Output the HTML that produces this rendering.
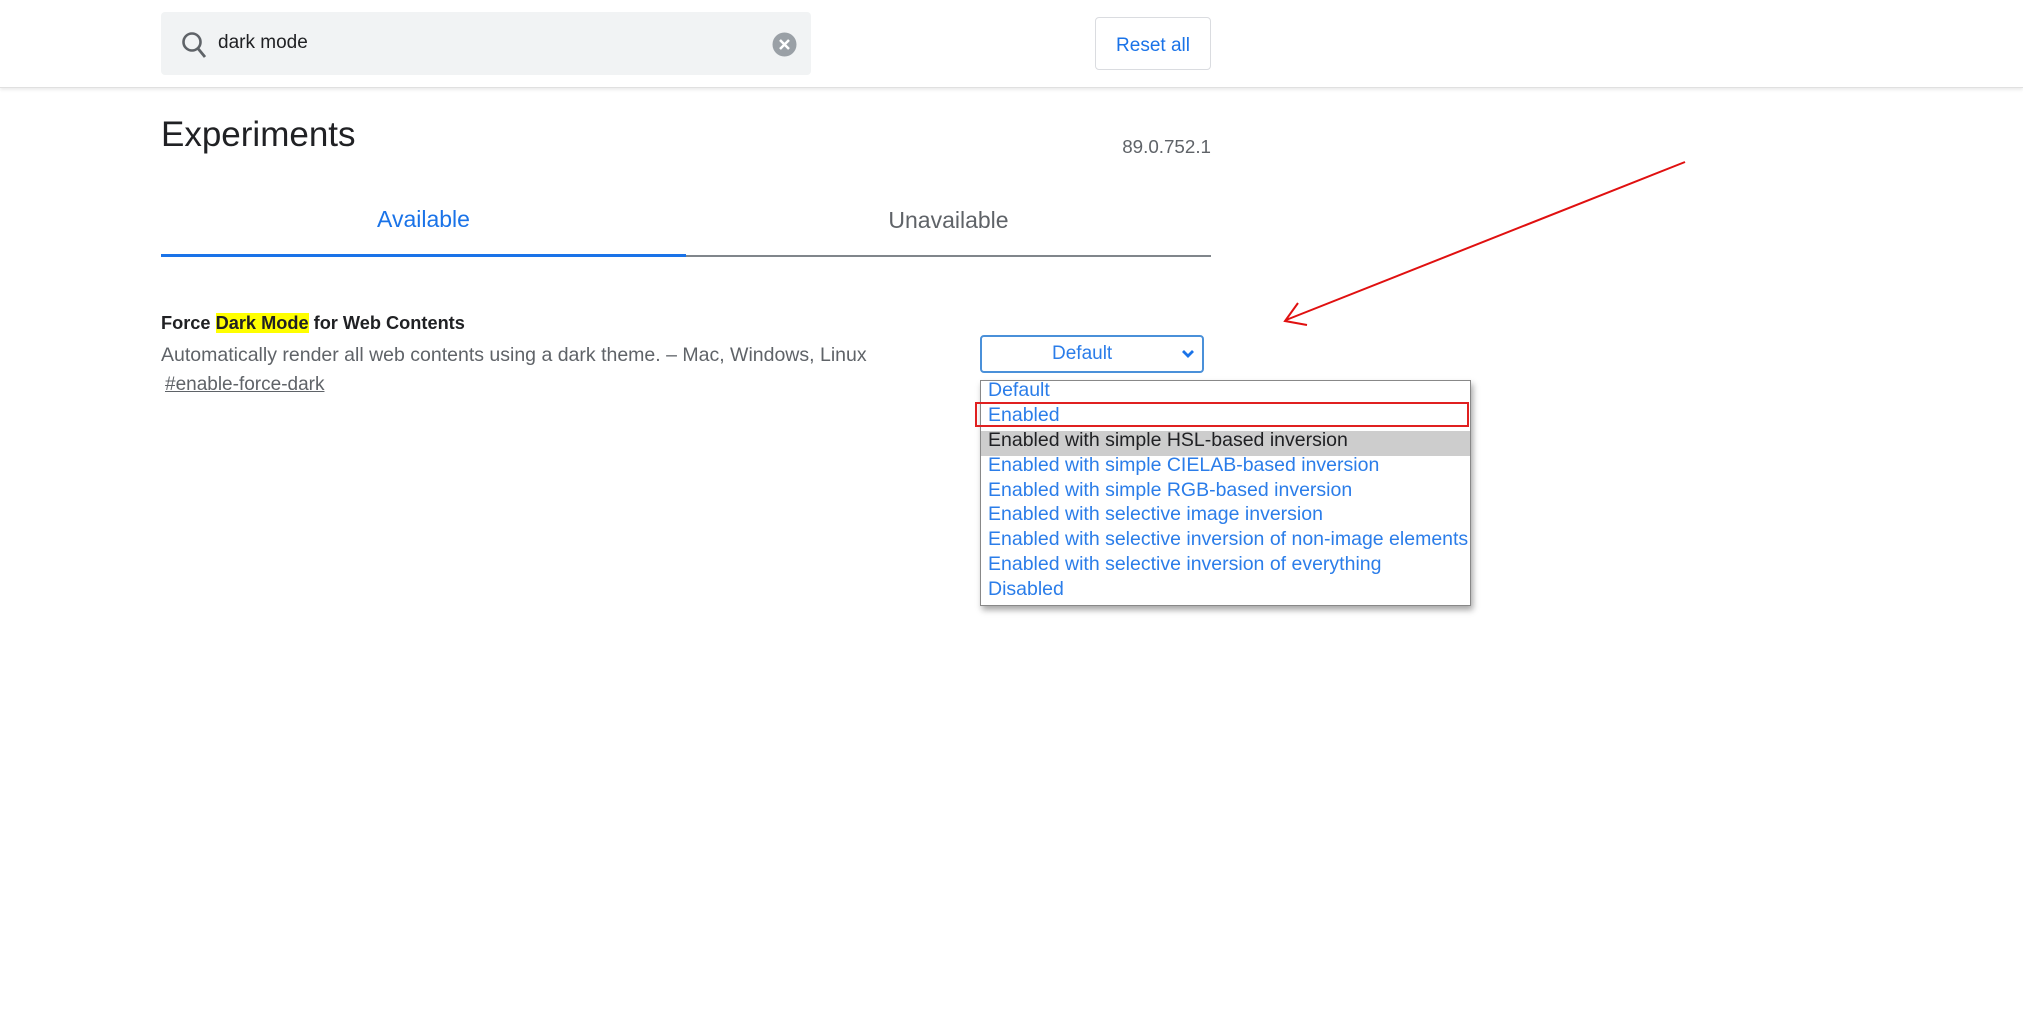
<!DOCTYPE html>
<html><head><meta charset="utf-8"><style>
*{margin:0;padding:0;box-sizing:border-box}
body{width:2023px;height:1018px;background:#fff;position:relative;overflow:hidden;font-family:"Liberation Sans",Arial,sans-serif}
.a{position:absolute;white-space:nowrap}
.hdr{position:absolute;left:0;top:0;width:2023px;height:88px;border-bottom:1px solid #e0e0e0;box-shadow:0 2px 3px rgba(0,0,0,.08)}
.search{left:161px;top:12px;width:650px;height:63px;background:#f1f3f4;border-radius:4px}
.btn{left:1095px;top:17px;width:116px;height:53px;border:1px solid #dadce0;border-radius:4px;color:#1a73e8;font-size:19px;text-align:center;line-height:55px}
.sel{left:980px;top:335px;width:224px;height:38px;border:2px solid #4a90d9;border-radius:4px;color:#2b7de9;font-size:19px;line-height:34px}
.dd{left:980px;top:380px;width:491px;height:226px;border:1px solid #888;background:#fff;box-shadow:2px 4px 6px rgba(0,0,0,.35)}
.dd div{height:24.9px;line-height:19px;padding-left:7px;font-size:19.5px;color:#2b7de9;white-space:nowrap}
.dd .h{background:#cdcdcd;color:#202124}
</style></head><body>
<div class="hdr"></div>
<div class="a search"></div>
<svg class="a" style="left:180px;top:30px" width="30" height="32" viewBox="0 0 30 32"><circle cx="12" cy="12" r="8.5" fill="none" stroke="#5f6368" stroke-width="2.6"/><line x1="18" y1="18.5" x2="25" y2="27" stroke="#5f6368" stroke-width="2.8"/></svg>
<div class="a" style="left:218px;top:32px;font-size:19px;color:#202124">dark mode</div>
<svg class="a" style="left:772px;top:32px" width="25" height="25" viewBox="0 0 25 25"><circle cx="12.5" cy="12.5" r="12" fill="#9aa0a6"/><path d="M8 8L17 17M17 8L8 17" stroke="#fff" stroke-width="2.5"/></svg>
<div class="a btn">Reset all</div>
<div class="a" style="left:161px;top:115px;font-size:35px;color:#202124">Experiments</div>
<div class="a" style="left:1100px;top:136px;width:111px;text-align:right;font-size:18.8px;color:#5f6368">89.0.752.1</div>
<div class="a" style="left:161px;top:206px;width:525px;text-align:center;font-size:23px;color:#1a73e8">Available</div>
<div class="a" style="left:686px;top:207px;width:525px;text-align:center;font-size:23px;color:#5f6368">Unavailable</div>
<div class="a" style="left:161px;top:254px;width:525px;height:3px;background:#1a73e8"></div>
<div class="a" style="left:686px;top:255px;width:525px;height:2px;background:#80868b"></div>
<div class="a" style="left:161px;top:313px;font-size:18.2px;font-weight:bold;color:#202124">Force <span style="background:#ffff00">Dark Mode</span> for Web Contents</div>
<div class="a" style="left:161px;top:344px;font-size:19.5px;color:#5f6368">Automatically render all web contents using a dark theme. – Mac, Windows, Linux</div>
<div class="a" style="left:165px;top:374px;font-size:19px;color:#5f6368;text-decoration:underline">#enable-force-dark</div>
<div class="a sel"><span style="position:absolute;left:70px">Default</span><svg style="position:absolute;left:199px;top:12px" width="14" height="10" viewBox="0 0 14 10"><path d="M2 2L7 7L12 2" fill="none" stroke="#1a73e8" stroke-width="2.8"/></svg></div>
<div class="a dd">
<div>Default</div><div>Enabled</div><div class="h">Enabled with simple HSL-based inversion</div><div>Enabled with simple CIELAB-based inversion</div><div>Enabled with simple RGB-based inversion</div><div>Enabled with selective image inversion</div><div>Enabled with selective inversion of non-image elements</div><div>Enabled with selective inversion of everything</div><div>Disabled</div>
</div>
<div class="a" style="left:975px;top:402px;width:494px;height:25px;border:2px solid #e02020"></div>
<svg class="a" style="left:0;top:0" width="2023" height="1018"><line x1="1685" y1="162" x2="1286" y2="320" stroke="#e01010" stroke-width="2"/><path d="M1298 303L1285 321L1307 325" fill="none" stroke="#e01010" stroke-width="2"/></svg>
</body></html>
